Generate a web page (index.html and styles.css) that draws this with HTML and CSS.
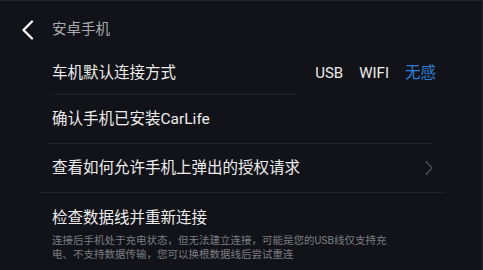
FILE: index.html
```html
<!DOCTYPE html>
<html lang="zh">
<head>
<meta charset="utf-8">
<link rel="stylesheet" href="styles.css">
</head>
<body>
<div class="screen">
  <header class="header">
    <svg class="back" width="14" height="20" viewBox="0 0 14 20"><polyline points="11,1.5 2.5,10 11,18.5" fill="none" stroke="#f2f2f2" stroke-width="2.4" stroke-linecap="round" stroke-linejoin="round"/></svg>
    <span class="title">安卓手机</span>
  </header>
  <div class="row row1">
    <span class="label">车机默认连接方式</span>
    <div class="options">
      <span class="opt">USB</span>
      <span class="opt">WIFI</span>
      <span class="opt active">无感</span>
    </div>
  </div>
  <div class="divider d1"></div>
  <div class="row row2">
    <span class="label">确认手机已安装CarLife</span>
  </div>
  <div class="divider d2"></div>
  <div class="row row3">
    <span class="label">查看如何允许手机上弹出的授权请求</span>
    <svg class="chev" width="10" height="16" viewBox="0 0 10 16"><polyline points="2,1.5 8,8 2,14.5" fill="none" stroke="#4a4b51" stroke-width="1.6" stroke-linecap="round" stroke-linejoin="round"/></svg>
  </div>
  <div class="divider d3"></div>
  <div class="block">
    <div class="label">检查数据线并重新连接</div>
    <p class="desc">连接后手机处于充电状态，但无法建立连接，可能是您的USB线仅支持充电、不支持数据传输，您可以换根数据线后尝试重连</p>
  </div>
</div>
</body>
</html>
```

FILE: styles.css
```css
html, body {
  margin: 0;
  padding: 0;
  background: #121318;
}
.screen {
  width: 483px;
  height: 270px;
  box-sizing: border-box;
  border-top: 1px solid #1f2025;
  border-right: 1px solid #1f2025;
  overflow: hidden;
  background: #121318;
  font-family: Roboto, "Noto Sans CJK SC", "Noto Sans", sans-serif;
  display: flex;
  flex-direction: column;
}
.header {
  height: 49px;
  display: flex;
  align-items: center;
  padding-left: 21px;
  box-sizing: border-box;
  padding-top: 8px;
}
.back {
  display: block;
}
.title {
  margin-left: 17px;
  font-size: 14.5px;
  color: #a8a9ad;
  line-height: 20px;
}
.row {
  display: flex;
  align-items: center;
  justify-content: space-between;
  padding-left: 52px;
  box-sizing: border-box;
}
.row1 {
  height: 44px;
  padding-right: 46px;
  padding-top: 2px;
}
.row2, .row3 {
  height: 48px;
}
.row3 {
  padding-right: 48px;
}
.label {
  font-size: 15.5px;
  color: #ececed;
  line-height: 20px;
}
.options {
  display: flex;
  align-items: baseline;
  gap: 16px;
  font-size: 15px;
  line-height: 20px;
  color: #ececec;
}
.opt.active {
  color: #2e7fd9;
  font-size: 15.5px;
}
.chev {
  display: block;
}
.divider {
  height: 1px;
  background: #1f2026;
}
.d1 {
  margin-left: 52px;
  width: 244px;
}
.d2 {
  margin-left: 48px;
  width: 384px;
}
.d3 {
  margin-left: 38px;
  width: 407px;
}
.block {
  padding-left: 52px;
  padding-top: 15px;
}
.desc {
  margin: 6px 0 0 0;
  width: 348px;
  font-size: 10.5px;
  line-height: 14px;
  color: #7c7d81;
}
```
